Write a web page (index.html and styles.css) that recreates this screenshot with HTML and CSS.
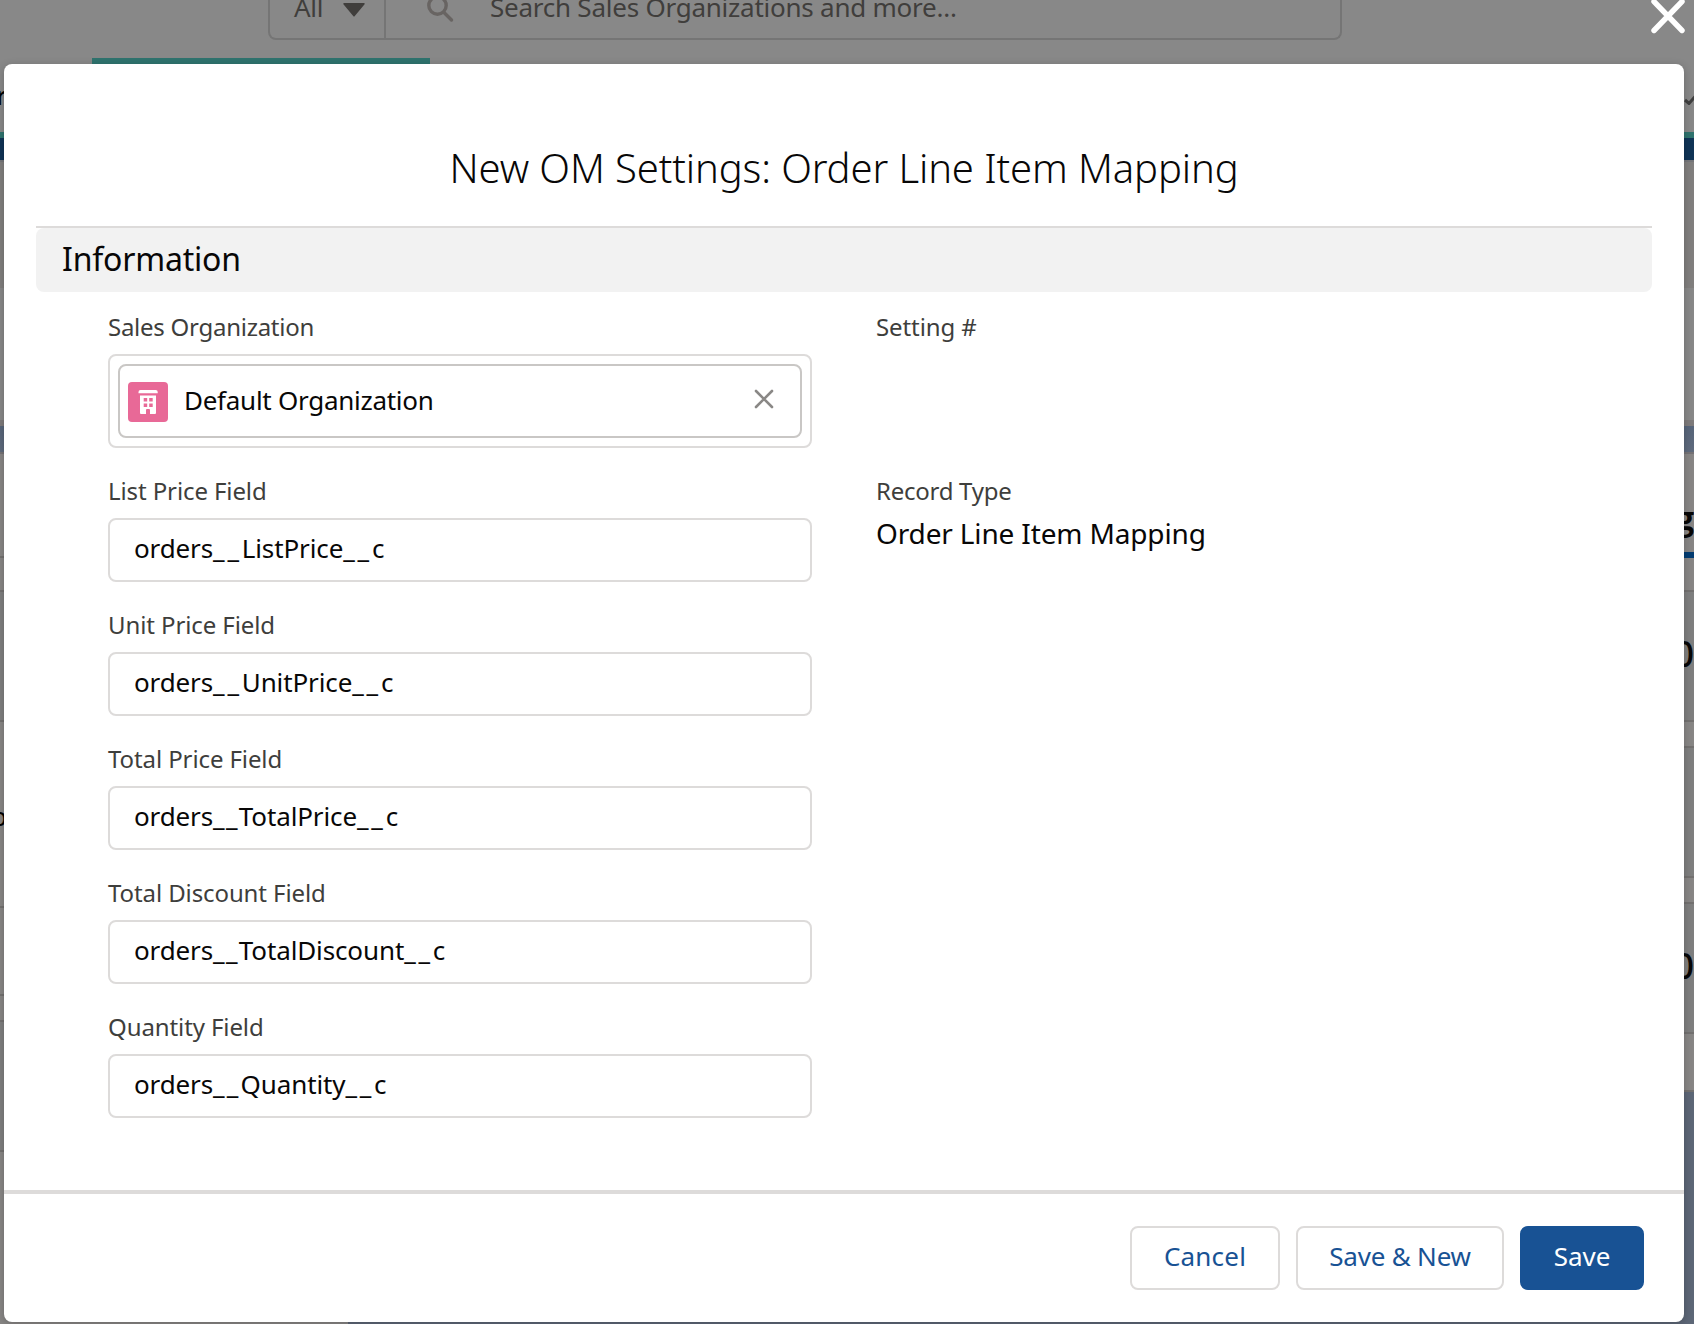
FILE: index.html
```
<!DOCTYPE html>
<html lang="en">
<head>
<meta charset="utf-8">
<title>New OM Settings</title>
<link rel="stylesheet" href="styles.css">
</head>
<body>
<div class="page">
  <header class="topbar">
    <div class="search">
      <div class="scope"><span>All</span><svg width="22" height="14" viewBox="0 0 22 14"><path d="M1 0h20a.8.8 0 0 1 .6 1.3L11.8 13a1 1 0 0 1-1.6 0L.4 1.300A.8.8 0 0 1 1 0z" fill="#403e3c"/></svg></div>
      <div class="query">
        <svg width="28" height="28" viewBox="0 0 28 28" fill="none" stroke="#686462" stroke-width="3.400" stroke-linecap="round"><circle cx="10.500" cy="9.500" r="8.700"/><path d="M17 16.500l7.500 7.500"/></svg>
        <span>Search Sales Organizations and more...</span>
      </div>
    </div>
  </header>
  <div class="tab-marker"></div>
  <nav class="navbar"><span>r</span><svg width="14" height="14" viewBox="0 0 14 14" fill="none" stroke="#3f3f3f" stroke-width="3"><path d="M1 9l4 3.500L15 1"/></svg></nav>
  <div class="brandline"></div>
  <div class="record-head"></div>
  <div class="record-sub"></div>
  <div class="sky"></div>
  <div class="panels">
    <div class="panel side">
      <div class="band h102"></div>
      <div class="band h32"></div>
      <div class="band h128 shade"></div>
      <div class="band h184"><span class="letter-p">p</span></div>
      <div class="band h86"></div>
      <div class="band h24"></div>
      <div class="band h128 shade"></div>
      <div class="band last"></div>
    </div>
    <div class="panel related">
      <div class="band tabs"><span>g</span></div>
      <div class="band h128 shade"><b>0</b></div>
      <div class="band h24"></div>
      <div class="band h128 shade"></div>
      <div class="band h24"></div>
      <div class="band h128 shade"><b>0</b></div>
      <div class="band h56"></div>
    </div>
  </div>
</div>

<svg class="close" width="36" height="36" viewBox="0 0 36 36" fill="none" stroke="#fff" stroke-width="5.400" stroke-linecap="round"><path d="M4 3.500l28 29M32 3.500l-28 29"/></svg>

<section class="modal">
  <h1>New OM Settings: Order Line Item Mapping</h1>
  <div class="rule"></div>
  <h2>Information</h2>
  <div class="form">
    <div class="field">
      <label class="tight">Sales Organization</label>
      <div class="lookup">
        <div class="pill">
          <svg width="40" height="40" viewBox="0 0 40 40"><rect width="40" height="40" rx="4" fill="#e86997"/><g fill="#fff"><path d="M10.500 11.300V10q0-2 2-2h15.200q2 0 2 2v1.300z"/><path fill-rule="evenodd" d="M12 13.500h16V31q0 1-1 1h-5v-4q0-1-1-1h-2q-1 0-1 1v4h-5q-1 0-1-1zM15.700 16v3.500h3.500V16zM21.200 16v3.500h3.500V16zM15.700 21.600v3.500h3.500v-3.500zM21.200 21.600v3.500h3.500v-3.500z"/></g></svg>
          <span>Default Organization</span>
          <svg width="20" height="20" viewBox="0 0 20 20" fill="none" stroke="#8a8886" stroke-width="2.600" stroke-linecap="round"><path d="M2 2l16 16M18 2L2 18"/></svg>
        </div>
      </div>
    </div>
    <div class="field"><label>Setting #</label></div>
    <div class="field"><label>List Price Field</label><div class="input">orders<i>__</i>ListPrice<i>__</i>c</div></div>
    <div class="field"><label class="tight">Record Type</label><div class="value">Order Line Item Mapping</div></div>
    <div class="field left"><label>Unit Price Field</label><div class="input">orders<i>__</i>UnitPrice<i>__</i>c</div></div>
    <div class="field left"><label>Total Price Field</label><div class="input">orders<i class="t">__</i>TotalPrice<i>__</i>c</div></div>
    <div class="field left"><label>Total Discount Field</label><div class="input">orders<i class="t">__</i>TotalDiscount<i>__</i>c</div></div>
    <div class="field left"><label>Quantity Field</label><div class="input">orders<i class="q">__</i>Quantity<i>__</i>c</div></div>
  </div>
  <footer>
    <button class="cancel">Cancel</button>
    <button class="save-new">Save &amp; New</button>
    <button class="save">Save</button>
  </footer>
</section>
</body>
</html>
```
FILE: styles.css
```
* { box-sizing: border-box; }
body {
  margin: 0;
  height: 1324px;
  position: relative;
  overflow: hidden;
  background: #5d6777;
  color: #080707;
  font-family: "Noto Sans", "Open Sans", sans-serif;
}
svg { flex: none; display: block; }

/* dimmed page */
.page { height: 1324px; display: flex; flex-direction: column; overflow: hidden; }
.page > * { flex: none; }
.topbar { height: 58px; background: #888; padding-left: 268px; }
.search {
  width: 1074px; height: 40px;
  display: flex;
  border: 2px solid #757575; border-top: 0;
  border-radius: 0 0 8px 8px;
  font-size: 26px; line-height: 36px; color: #403e3c;
}
.scope { width: 116px; display: flex; border-right: 2px solid #757575; padding-left: 24px; }
.scope span { width: 49px; margin-top: -11px; letter-spacing: -0.3px; }
.scope svg { margin-top: 3px; }
.query { display: flex; padding-left: 41px; }
.query svg { margin-top: -4px; width: 28px; }
.query span { margin: -11px 0 0 35px; letter-spacing: -0.24px; white-space: nowrap; }
.tab-marker { height: 6px; background: linear-gradient(90deg, #888 92px, #2f736e 92px, #2f736e 430px, #888 430px); }
.navbar { height: 68px; background: #888; display: flex; justify-content: space-between; padding-top: 18px; font-size: 26px; line-height: 26px; color: #000; }
.navbar span { margin-left: -4px; font-weight: 500; }
.navbar svg { margin-top: 9px; margin-right: -4px; }
.brandline { height: 28px; background: #103456; border-top: 6px solid #2f736e; }
.record-head { height: 128px; background: #817f7e; border-top: 2px solid #75767a; }
.record-sub { height: 138px; background: #888; border-bottom: 6px solid #7e7b7b; }
.sky { height: 28px; background: linear-gradient(#57657a, #5f6b7d); border-bottom: 2px solid #757275; }
.panels { height: 870px; display: flex; align-items: flex-start; justify-content: space-between; }
.panel { background: #888685; overflow: hidden; width: 348px; }
.band { box-sizing: content-box; border-bottom: 2px solid #737170; display: flex; }
.shade { background: #7f7f7f; }
.h24 { height: 24px; }
.h32 { height: 32px; }
.h56 { height: 56px; }
.h86 { height: 86px; }
.h102 { height: 102px; }
.h128 { height: 128px; }
.h184 { height: 184px; }
.last { height: 172px; border: 0; }
.letter-p { margin: 76px 0 0 -9px; font-size: 26px; line-height: 36px; color: #000; }
.related .band { justify-content: flex-end; }
.related .band b { font-size: 36px; line-height: 48px; font-weight: 500; margin-top: 38px; }
.tabs { height: 136px; }
.tabs span {
  height: 104px; width: 120px; padding-top: 42px; text-align: right;
  font: 700 32px/44px "Open Sans", sans-serif;
  border-bottom: 6px solid #033c72;
}

.close { position: absolute; left: 1650px; top: -2px; }

/* dialog */
.modal {
  position: absolute; left: 4px; top: 64px;
  width: 1680px; height: 1258px;
  display: flex; flex-direction: column;
  background: #fff; border-radius: 8px;
  box-shadow: 0 2px 8px rgba(0, 0, 0, .22);
  overflow: hidden;
}
h1 {
  margin: 0; height: 162px; padding-top: 76px;
  font-size: 40px; line-height: 56px; font-weight: 300; text-align: center;
  letter-spacing: -0.1px;
}
.rule { margin: 0 32px; height: 2px; background: #dddbda; }
h2 {
  margin: 0 32px; height: 64px; padding-left: 26px;
  background: #f2f2f2; border-radius: 8px;
  font-size: 32px; line-height: 61px; font-weight: 400; letter-spacing: -0.2px;
}
.form {
  flex: 1; padding: 17px 104px 0;
  display: grid; grid-template-columns: 704px 704px;
  column-gap: 64px; row-gap: 25px; align-content: start;
}
.field { display: flex; flex-direction: column; }
.left { grid-column: 1; }
label { font-size: 24px; line-height: 36px; color: #3e3e3c; letter-spacing: -0.1px; }
.tight { letter-spacing: -0.26px; }
.input, .lookup { margin-top: 9px; border: 2px solid #dddbda; border-radius: 8px; }
.input { height: 64px; padding-left: 24px; font-size: 26px; line-height: 56px; letter-spacing: -0.12px; }
.input i { font-style: normal; letter-spacing: 2.8px; }
.input .t { letter-spacing: 1.3px; }
.input .q { letter-spacing: 2.2px; }
.lookup { height: 94px; padding: 8px; }
.pill {
  height: 74px; display: flex; align-items: center;
  border: 2px solid #c9c7c5; border-radius: 8px;
  padding: 0 26px 0 8px;
  font-size: 26px; line-height: 36px; letter-spacing: -0.27px;
}
.pill span { flex: 1; margin: -3px 0 0 16px; }
.pill svg:last-child { margin-top: -4px; }
.pill svg:first-child { margin-top: 2px; }
.value { margin-top: 6px; font-size: 28px; line-height: 36px; letter-spacing: -0.15px; }
footer {
  height: 132px; padding: 32px 40px 0 0;
  display: flex; justify-content: flex-end; gap: 16px;
  border-top: 4px solid #dddbda;
}
button {
  height: 64px; padding: 0 0 4px;
  border: 2px solid #dddbda; border-radius: 8px;
  background: #fff; color: #185294;
  font: 26px "Noto Sans", "Open Sans", sans-serif;
}
.cancel { width: 150px; letter-spacing: .2px; }
.save-new { width: 208px; letter-spacing: -.2px; }
.save { width: 124px; background: #185294; border-color: #185294; color: #fff; }
```
